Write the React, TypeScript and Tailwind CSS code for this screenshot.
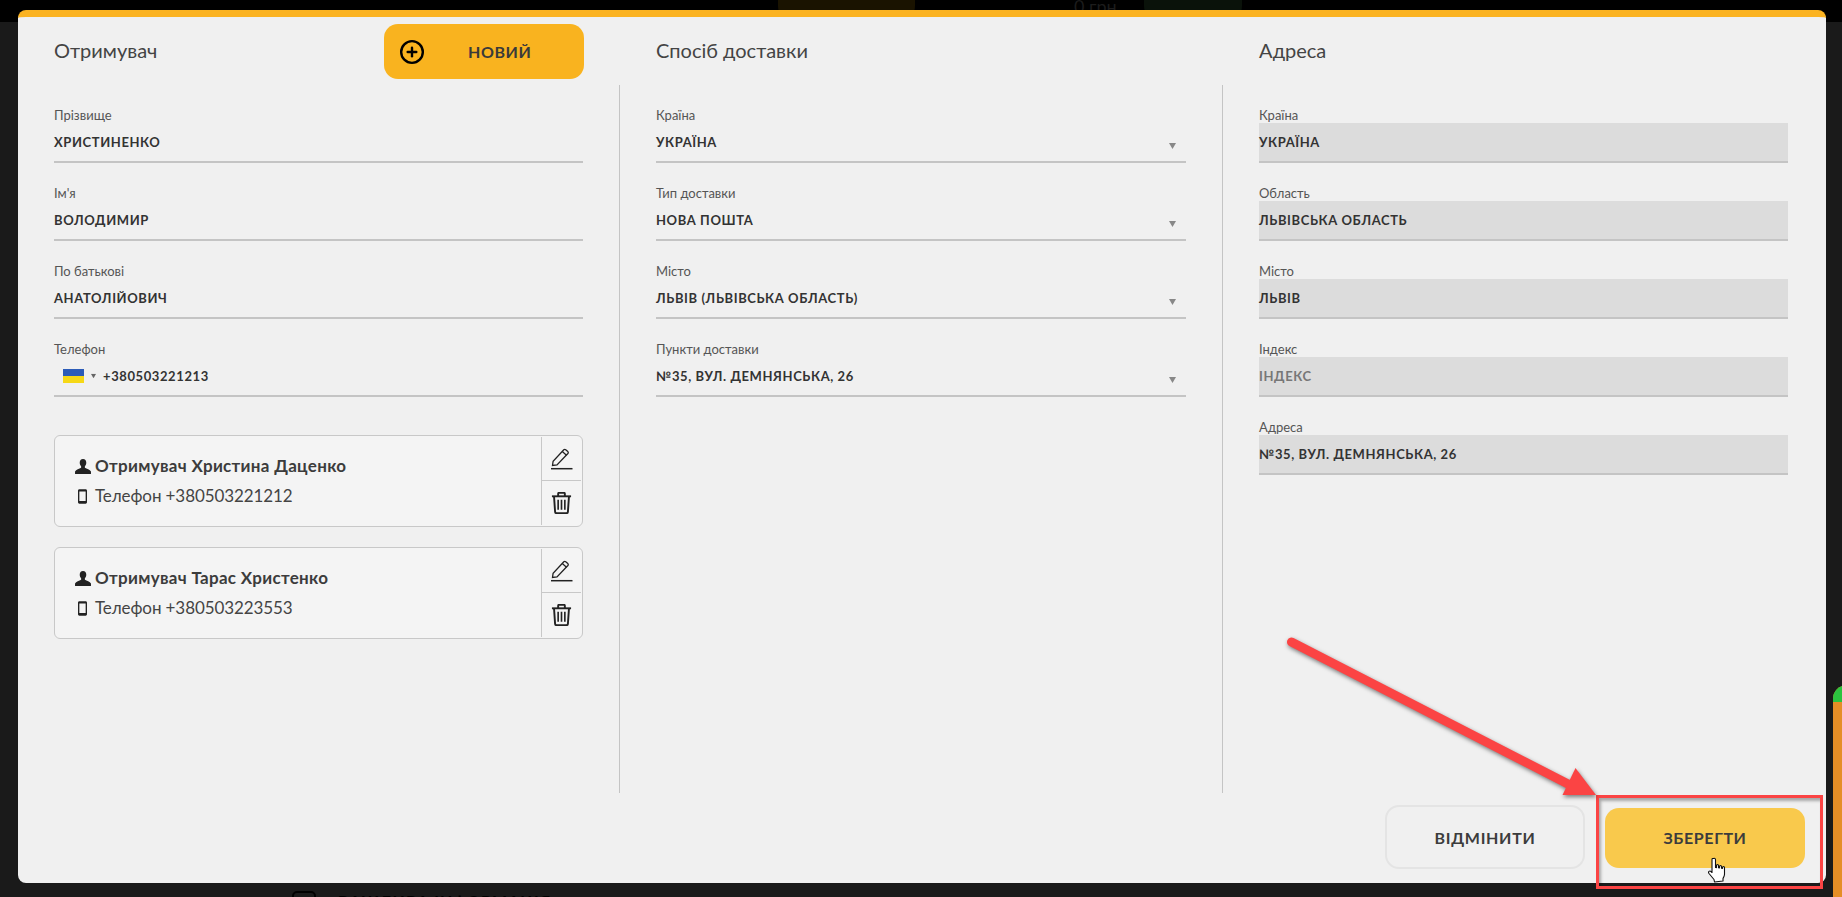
import { CirclePlus } from 'lucide-react';

const font = "font-['Lato','Open_Sans',sans-serif]";

function Caret({ className }: { className?: string }) {
  return (
    <svg width="7" height="6" viewBox="0 0 7 6" className={className}>
      <path d="M0 0h7L3.5 6z" fill="currentColor" />
    </svg>
  );
}

function UserIcon() {
  return (
    <svg width="16" height="15" viewBox="0 0 17 16" className="shrink-0 text-[#222]">
      <path
        d="M8.5 0C6.2 0 5 1.700 5 3.900c0 1.500.6 2.900 1.500 3.800v1.500C4.600 10.400 1 11 0 13.200V16h17v-2.800c-1-2.200-4.600-2.800-6.500-4V7.700c.9-.9 1.500-2.300 1.500-3.800C12 1.700 10.800 0 8.500 0z"
        fill="currentColor"
      />
    </svg>
  );
}

function PhoneIcon() {
  return (
    <svg width="9" height="15" viewBox="0 0 10 16" className="shrink-0 text-[#222]">
      <path
        fillRule="evenodd"
        d="M1.500 0h7C9.300 0 10 .7 10 1.500v13c0 .8-.7 1.500-1.500 1.500h-7C.7 16 0 15.300 0 14.500v-13C0 .7.700 0 1.500 0zM1.500 2.500v10.500h7V2.500z"
        fill="currentColor"
      />
    </svg>
  );
}

function PencilIcon() {
  return (
    <svg width="22" height="22" viewBox="0 0 22 22" fill="none" stroke="#222" strokeWidth="1.300">
      <path d="M1.500 17.500l.6-4.300L12.800 1.800c.6-.6 1.300-.6 1.900-.1l2.100 1.900c.6.500.6 1.300.1 1.900L6 17z" />
      <path d="M11.300 3.500l4.200 3.800" />
      <path d="M0 20.700h21.500" strokeWidth="1.500" />
    </svg>
  );
}

function TrashIcon() {
  return (
    <svg width="21" height="22" viewBox="0 0 21 23" fill="none" stroke="#222" strokeWidth="2">
      <path d="M.5 4.500h20" />
      <path d="M7 4.300V1.800c0-.5.400-.9.900-.9h5.200c.5 0 .9.400.9.900v2.500" />
      <path d="M2.700 4.700l1.100 16c.1.900.7 1.400 1.500 1.400h10.400c.8 0 1.400-.5 1.500-1.400l1.100-16" />
      <path d="M7 8v10.500M10.500 8v10.500M14 8v10.500" strokeWidth="1.700" />
    </svg>
  );
}

function Field({
  label,
  value,
  select,
  filled,
  muted,
}: {
  label: string;
  value: string;
  select?: boolean;
  filled?: boolean;
  muted?: boolean;
}) {
  return (
    <div>
      <div className="h-4 text-[13px] leading-4 text-[#555]">{label}</div>
      <div
        className={`flex h-10 items-center justify-between border-b-2 border-[#c4c4c4] ${filled ? 'bg-[#dcdcdc]' : ''}`}
      >
        <span
          className={`pt-px text-[13px] font-bold tracking-[0.6px] ${muted ? 'text-[#777]' : 'text-[#333]'}`}
        >
          {value}
        </span>
        {select && <Caret className="mt-2 mr-[10px] text-[#888]" />}
      </div>
    </div>
  );
}

function PhoneField() {
  return (
    <div>
      <div className="h-4 text-[13px] leading-4 text-[#555]">Телефон</div>
      <div className="flex h-10 items-center border-b-2 border-[#c4c4c4] pl-[9px]">
        <div className="flex h-[14px] w-[21px] flex-col">
          <div className="h-[7px] bg-[#2c5cb8]" />
          <div className="h-[7px] bg-[#f6d816]" />
        </div>
        <Caret className="ml-[6px] scale-75 text-[#666]" />
        <span className="ml-[6px] pt-px text-[13px] font-bold tracking-[0.6px] text-[#333]">+380503221213</span>
      </div>
    </div>
  );
}

function RecipientCard({ name, phone }: { name: string; phone: string }) {
  return (
    <div className="flex h-[92px] rounded-[6px] border border-[#c8c8c8] bg-[#f4f4f4] py-px pr-px">
      <div className="flex flex-1 flex-col gap-[10px] pt-[19px] pl-5">
        <div className="flex items-center gap-[4px]">
          <UserIcon />
          <span className="text-[17px] leading-5 font-bold tracking-[0.3px] text-[#3c3c3c]">{name}</span>
        </div>
        <div className="flex items-center gap-[8px] pl-[3px]">
          <PhoneIcon />
          <span className="text-[17px] leading-5 tracking-[-0.1px] text-[#444]">{phone}</span>
        </div>
      </div>
      <div className="flex w-[40px] flex-col border-l border-[#c8c8c8]">
        <div className="flex h-[44px] items-center justify-center border-b border-[#c8c8c8]">
          <PencilIcon />
        </div>
        <div className="flex flex-1 items-center justify-center">
          <TrashIcon />
        </div>
      </div>
    </div>
  );
}

export default function App() {
  return (
    <div className={`relative h-[897px] w-[1842px] overflow-hidden bg-[#1a1a1a] pt-[10px] pl-[18px] ${font}`}>
      {/* page behind the modal */}
      <div className="absolute inset-x-0 top-0 h-[22px] bg-black">
        <div className="absolute top-[-20px] left-[778px] h-[40px] w-[137px] rounded-[14px] bg-[#1a1300]" />
        <div className="absolute top-[-7px] left-[1074px] text-[18px] text-[#1c1c1c]">0 грн</div>
        <div className="absolute top-[-20px] left-[1144px] h-[40px] w-[98px] rounded-[14px] bg-[#0a120a]" />
      </div>
      <div className="absolute top-[891px] left-[292px] h-6 w-6 rounded-[5px] border-2 border-black" />
      <div className="absolute top-[889px] left-[338px] text-[16px] leading-6 font-bold tracking-[1px] text-black">
        ВАЖЛИВА ІНФОРМАЦІЯ
      </div>
      <div className="absolute top-[685px] left-[1833px] h-[220px] w-[20px] overflow-hidden rounded-tl-[14px] bg-[#e58e26]">
        <div className="h-[17px] bg-[#2bc43f]" />
      </div>

      {/* modal */}
      <div className="relative flex h-[873px] w-[1808px] flex-col rounded-[8px] border-t-[7px] border-[#fbb321] bg-[#f0f0f0]">
        <div className="grid h-[68px] grid-cols-[529px_530px_529px] gap-x-[73px] pl-9">
          <div className="flex items-start justify-between pt-[7px]">
            <h2 className="mt-[14px] text-[20px] leading-6 text-[#444]">Отримувач</h2>
            <button className="-mr-px flex h-[55px] w-[200px] items-center rounded-[14px] bg-[#f9b31f] pl-[15px]">
              <CirclePlus size={26} strokeWidth={2.2} className="text-black" />
              <span className="ml-[43px] text-[16px] font-bold tracking-[0.6px] text-[#3a3a3a]">НОВИЙ</span>
            </button>
          </div>
          <h2 className="mt-[21px] text-[20px] leading-6 text-[#444]">Спосіб доставки</h2>
          <h2 className="mt-[21px] text-[20px] leading-6 text-[#444]">Адреса</h2>
        </div>

        <div className="flex h-[708px]">
          <div className="w-[601px] pt-[22px] pr-9 pl-9">
            <div className="flex flex-col gap-[22px]">
              <Field label="Прізвище" value="ХРИСТИНЕНКО" />
              <Field label="Ім'я" value="ВОЛОДИМИР" />
              <Field label="По батькові" value="АНАТОЛІЙОВИЧ" />
              <PhoneField />
            </div>
            <div className="mt-[38px] flex flex-col gap-5">
              <RecipientCard name="Отримувач Христина Даценко" phone="Телефон +380503221212" />
              <RecipientCard name="Отримувач Тарас Христенко" phone="Телефон +380503223553" />
            </div>
          </div>
          <div className="w-[603px] border-l border-[#c4c4c4] px-9 pt-[22px]">
            <div className="flex flex-col gap-[22px]">
              <Field label="Країна" value="УКРАЇНА" select />
              <Field label="Тип доставки" value="НОВА ПОШТА" select />
              <Field label="Місто" value="ЛЬВІВ (ЛЬВІВСЬКА ОБЛАСТЬ)" select />
              <Field label="Пункти доставки" value="№35, ВУЛ. ДЕМНЯНСЬКА, 26" select />
            </div>
          </div>
          <div className="flex-1 border-l border-[#c4c4c4] pt-[22px] pr-[38px] pl-9">
            <div className="flex flex-col gap-[22px]">
              <Field label="Країна" value="УКРАЇНА" filled />
              <Field label="Область" value="ЛЬВІВСЬКА ОБЛАСТЬ" filled />
              <Field label="Місто" value="ЛЬВІВ" filled />
              <Field label="Індекс" value="ІНДЕКС" filled muted />
              <Field label="Адреса" value="№35, ВУЛ. ДЕМНЯНСЬКА, 26" filled />
            </div>
          </div>
        </div>

        <div className="flex items-center justify-end gap-5 pt-3 pr-[21px]">
          <button className="h-16 w-[200px] rounded-[14px] border-2 border-[#e4e4e4] pt-px text-[16px] font-bold tracking-[0.7px] text-[#3c3c3c]">
            ВІДМІНИТИ
          </button>
          <button className="mt-[2px] h-[60px] w-[200px] rounded-[14px] bg-[#f9c94c] text-[16px] font-bold tracking-[0.6px] text-[#3c3c3c]">
            ЗБЕРЕГТИ
          </button>
        </div>
      </div>

      {/* annotation */}
      <div className="absolute top-[795px] left-[1596px] h-[94px] w-[227px] border-[3px] border-[#fb4444] shadow-[inset_2px_3px_3px_rgba(0,0,0,0.3)]" />
      <svg
        width="1842"
        height="897"
        viewBox="0 0 1842 897"
        className="pointer-events-none absolute top-0 left-0 drop-shadow-[1px_2px_2px_rgba(0,0,0,0.5)]"
      >
        <path d="M1291.500 642L1570 785" stroke="#fb4444" strokeWidth="9" strokeLinecap="round" fill="none" />
        <path d="M1575.500 768L1596 795L1562.500 795z" fill="#fb4444" />
      </svg>
      <svg width="20" height="26" viewBox="0 0 20 26" className="absolute top-[857px] left-[1708px]">
        <path
          d="M5.500 1.500c1-.6 2 0 2 1v8l1 .1V8.500c0-1.300 2-1.300 2 0v2.300l1 .1V9.500c0-1.300 2-1.300 2 0v1.800l1 .1v-1c0-1.300 2-1.300 2 0v6.800c0 2-1 3.300-1.500 4.300v2.500l-8.500 1-.5-2.500-5-6c-1.300-1.700.6-3.200 2-2l1 1V2.500c0-.4.200-.8.500-1z"
          fill="#fff"
          stroke="#111"
          strokeWidth="1.100"
          strokeLinejoin="round"
        />
      </svg>
    </div>
  );
}
